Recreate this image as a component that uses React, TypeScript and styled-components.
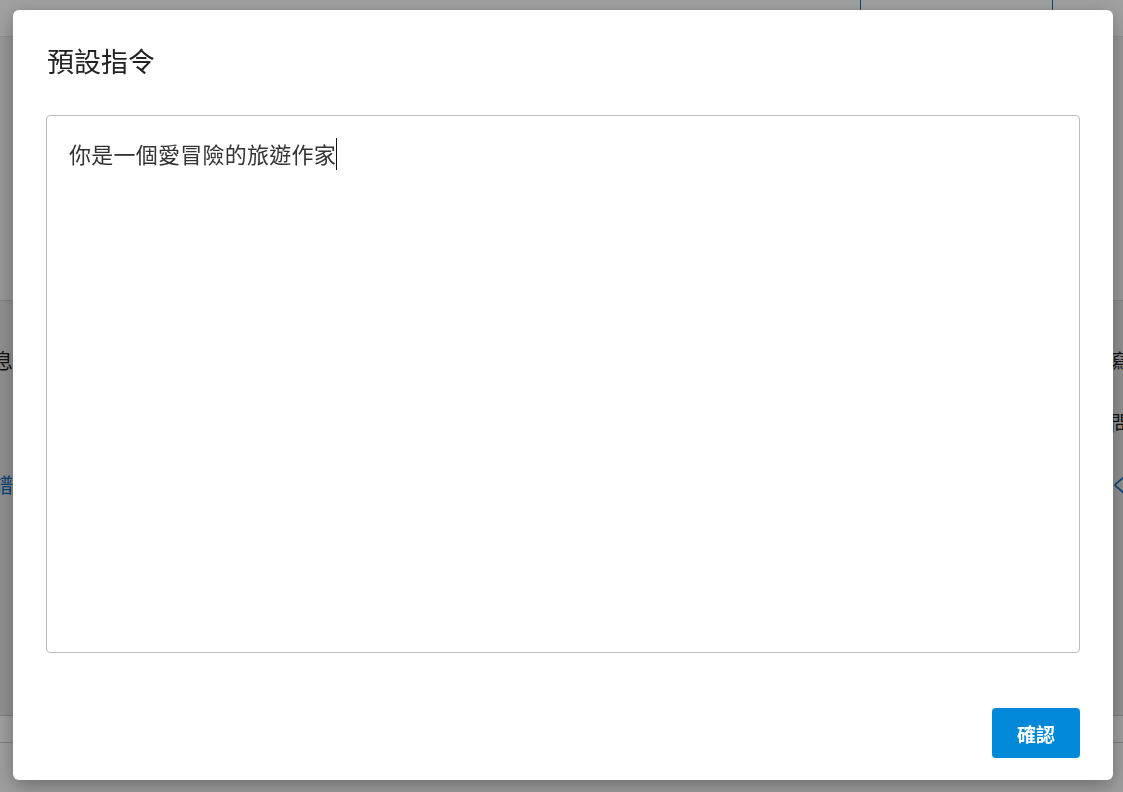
import React from "react";
import styled, { createGlobalStyle } from "styled-components";

const Global = createGlobalStyle`
  html, body { margin: 0; padding: 0; }
  body {
    width: 1123px;
    height: 792px;
    overflow: hidden;
    background: #ffffff;
    font-family: "Noto Sans CJK TC", "Noto Sans", sans-serif;
  }
`;

const Page = styled.div`
  width: 1123px;
  height: 792px;
  display: flex;
  flex-direction: column;
  background: #fff;
`;

const Header = styled.header`
  height: 36px;
  flex: none;
  display: flex;
  align-items: stretch;
  justify-content: flex-end;
  padding-right: 70px;
  border-bottom: 1px solid #e6e2da;
  background: #fdfdfd;
`;

const HeaderBox = styled.div`
  width: 191px;
  border-left: 1px solid #0a6fc2;
  border-right: 1px solid #0a6fc2;
`;

const Hero = styled.section`
  height: 263px;
  flex: none;
  background: #f0f0f0;
  border-bottom: 1px solid #cfcfcf;
`;

const Body = styled.main`
  flex: 1;
  display: flex;
  justify-content: space-between;
  background: #e4e4e4;
`;

const SideCol = styled.div<{ $align: "left" | "right" }>`
  width: 13px;
  overflow: hidden;
  display: flex;
  flex-direction: column;
  align-items: ${(p) => (p.$align === "left" ? "flex-end" : "flex-start")};
  padding-top: 50px;
  gap: 42px;
`;

const SideText = styled.span<{ $link?: boolean }>`
  font-size: 20px;
  line-height: 20px;
  white-space: nowrap;
  color: ${(p) => (p.$link ? "#0a6cc0" : "#222")};
`;

const Footer = styled.footer`
  height: 76px;
  flex: none;
  background: #fafafa;
  border-top: 1px solid #c8c8c8;
  display: flex;
  flex-direction: column;
`;

const FooterRow = styled.div`
  height: 26px;
  border-bottom: 1px solid #c8c8c8;
`;

const Overlay = styled.div`
  position: fixed;
  inset: 0;
  background: rgba(0, 0, 0, 0.37);
  display: flex;
  align-items: flex-start;
  justify-content: flex-start;
  padding: 10px 0 0 13px;
`;

const Dialog = styled.div`
  width: 1100px;
  height: 770px;
  box-sizing: border-box;
  background: #fff;
  border-radius: 6px;
  box-shadow: 0 6px 20px rgba(0, 0, 0, 0.3);
  padding: 35px 33px 22px 33px;
  display: flex;
  flex-direction: column;
`;

const Title = styled.h2`
  margin: 0 0 0 1px;
  font-size: 27px;
  line-height: 32px;
  font-weight: 400;
  color: #222;
`;

const Editor = styled.div`
  margin-top: 38px;
  height: 538px;
  box-sizing: border-box;
  border: 1px solid #bdbdbd;
  border-radius: 4px;
  padding: 22px 22px;
  font-size: 22px;
  letter-spacing: 0.25px;
  line-height: 30px;
  color: #333;
`;

const Caret = styled.span`
  display: inline-block;
  width: 1px;
  height: 32px;
  background: #111;
  vertical-align: top;
`;

const Actions = styled.div`
  margin-top: auto;
  display: flex;
  justify-content: flex-end;
`;

const Button = styled.button`
  width: 88px;
  height: 50px;
  border: none;
  border-radius: 4px;
  background: #0288d9;
  color: #fff;
  font-family: "Noto Sans CJK TC", "Noto Sans", sans-serif;
  font-size: 19px;
  font-weight: 700;
  cursor: pointer;
`;

export default function App() {
  return (
    <>
      <Global />
      <Page>
        <Header>
          <HeaderBox />
        </Header>
        <Hero />
        <Body>
          <SideCol $align="left">
            <SideText>訊息</SideText>
            <SideText>&nbsp;</SideText>
            <SideText $link>食譜</SideText>
          </SideCol>
          <SideCol $align="right">
            <SideText>寫作</SideText>
            <SideText>問題</SideText>
            <SideText $link>く</SideText>
          </SideCol>
        </Body>
        <Footer>
          <FooterRow />
        </Footer>
      </Page>
      <Overlay>
        <Dialog>
          <Title>預設指令</Title>
          <Editor>
            你是一個愛冒險的旅遊作家
            <Caret />
          </Editor>
          <Actions>
            <Button>確認</Button>
          </Actions>
        </Dialog>
      </Overlay>
    </>
  );
}
